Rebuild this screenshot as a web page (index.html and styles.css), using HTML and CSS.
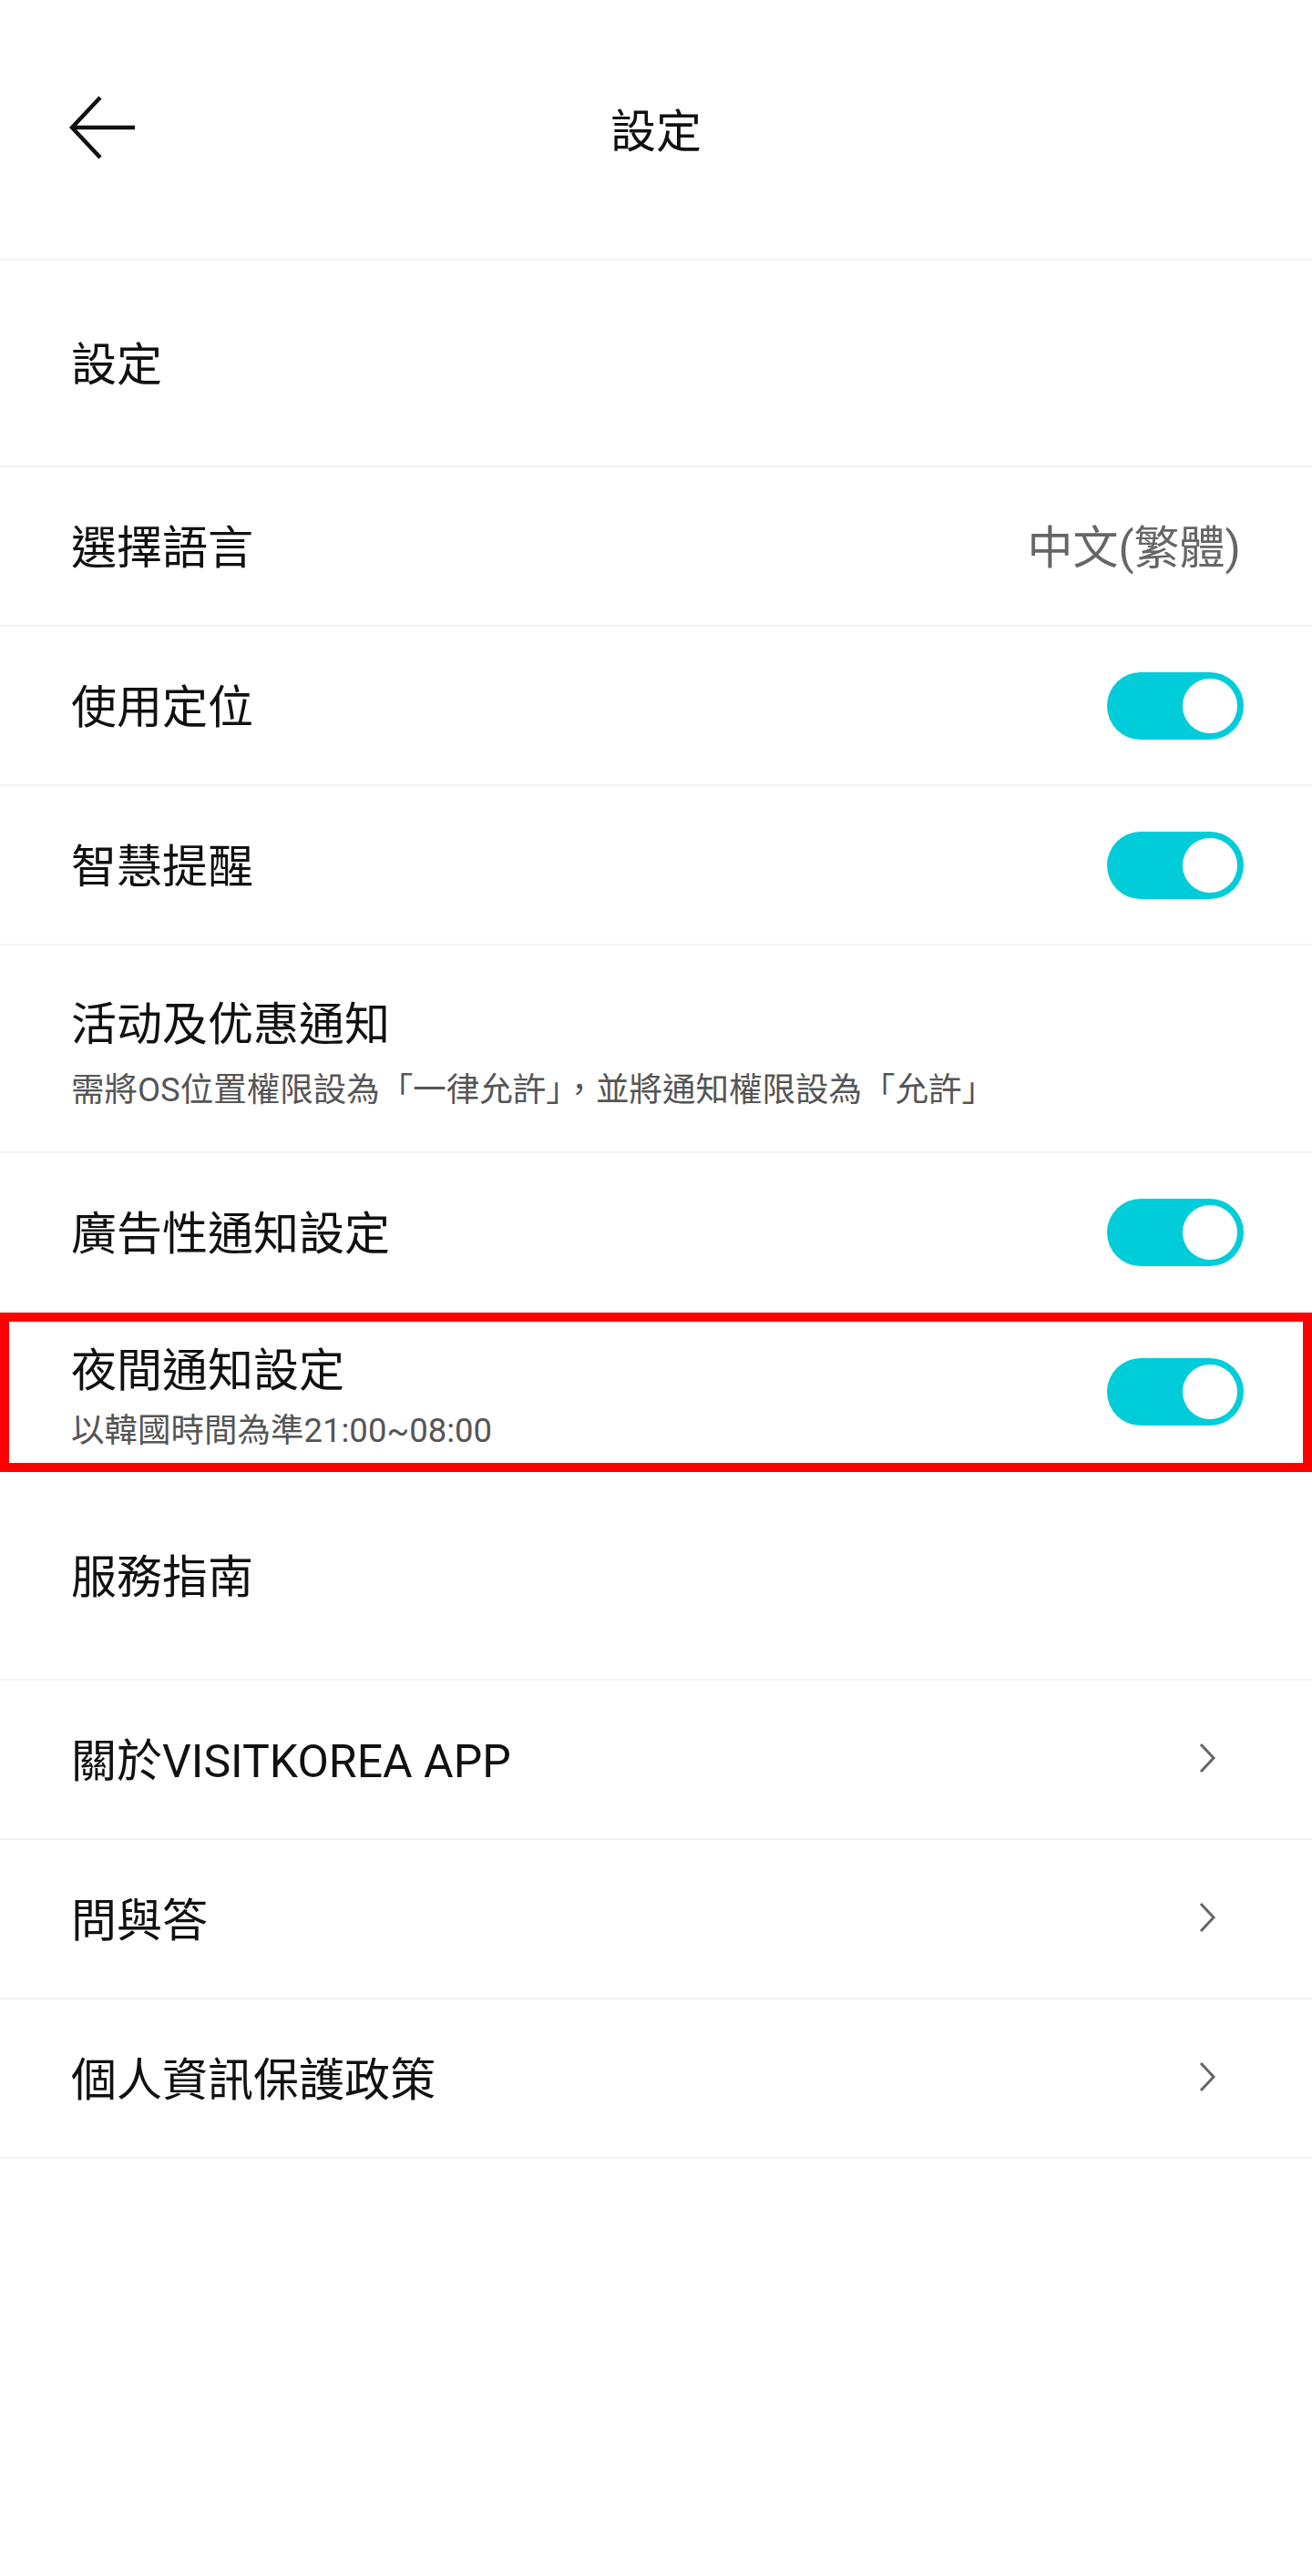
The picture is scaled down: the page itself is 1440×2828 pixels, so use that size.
FILE: index.html
```html
<!DOCTYPE html>
<html lang="zh-Hant">
  <head>
    <meta charset="UTF-8" />
    <meta name="viewport" content="width=device-width, initial-scale=1.0" />
    <title>設定</title>
    <link rel="stylesheet" href="styles.css">
  </head>

  <body>
    <div id="app">
      <header class="topbar">
        <button class="back" aria-label="back">
          <svg width="74" height="72" viewBox="0 0 74 72">
            <path d="M34 3 L3 36 L34 69 M3 36 H72" fill="none" stroke="#111" stroke-width="4.5" stroke-linejoin="miter" />
          </svg>
        </button>
        <h1 class="title">設定</h1>
        <div></div>
      </header>

      <div class="group">設定</div>
      <div class="row">
        <span class="label">選擇語言</span>
        <span class="value">中文(繁體)</span>
      </div>
      <div class="row">
        <span class="label">使用定位</span>
        <span class="toggle on"><span class="knob"></span></span>
      </div>
      <div class="row">
        <span class="label">智慧提醒</span>
        <span class="toggle on"><span class="knob"></span></span>
      </div>
      <div class="row tall">
        <div class="texts">
          <div class="label">活动及优惠通知</div>
          <div class="sub">需將OS位置權限設為「一律允許」，並將通知權限設為「允許」</div>
        </div>
      </div>
      <div class="row">
        <span class="label">廣告性通知設定</span>
        <span class="toggle on"><span class="knob"></span></span>
      </div>
      <div class="row marked">
        <div class="texts">
          <div class="label">夜間通知設定</div>
          <div class="sub">以韓國時間為準21:00~08:00</div>
        </div>
        <span class="toggle on"><span class="knob"></span></span>
      </div>

      <div class="group tall">服務指南</div>
      <div class="row">
        <span class="label">關於VISITKOREA APP</span>
        <svg class="chev" width="20" height="34" viewBox="0 0 20 34"><path d="M3 2 L17 17 L3 32" fill="none" stroke="#666" stroke-width="3" /></svg>
      </div>
      <div class="row">
        <span class="label">問與答</span>
        <svg class="chev" width="20" height="34" viewBox="0 0 20 34"><path d="M3 2 L17 17 L3 32" fill="none" stroke="#666" stroke-width="3" /></svg>
      </div>
      <div class="row">
        <span class="label">個人資訊保護政策</span>
        <svg class="chev" width="20" height="34" viewBox="0 0 20 34"><path d="M3 2 L17 17 L3 32" fill="none" stroke="#666" stroke-width="3" /></svg>
      </div>
    </div>
  </body>

</html>
```

FILE: styles.css
```css
body {
  margin: 0;
  padding: 0;
  background: #fff;
  font-family: Roboto, "Noto Sans CJK TC", sans-serif;
  color: #111;
}

#app {
  width: 1440px;
  min-height: 2828px;
  background: #fff;
}

.topbar {
  height: 286px;
  box-sizing: border-box;
  border-bottom: 2px solid #f3f3f3;
  display: grid;
  grid-template-columns: 1fr auto 1fr;
  align-items: center;
}

.back {
  background: transparent;
  border: 0;
  padding: 0;
  width: 74px;
  height: 72px;
  display: flex;
  margin: -4px 0 0 76px;
}

.title {
  margin: 0;
  font-size: 50px;
  font-weight: 400;
  line-height: 60px;
  margin-top: 6px;
}

.group {
  height: 227px;
  box-sizing: border-box;
  border-bottom: 2px solid #f3f3f3;
  display: flex;
  align-items: center;
  padding: 4px 0 0 78px;
  font-size: 50px;
  line-height: 60px;
}

.group.tall {
  height: 229px;
}

.row {
  height: 175px;
  box-sizing: border-box;
  border-bottom: 2px solid #f3f3f3;
  display: flex;
  align-items: center;
  justify-content: space-between;
  padding: 4px 75px 0 78px;
}

.row.tall {
  height: 228px;
}

.label {
  font-size: 50px;
  line-height: 60px;
}

.value {
  font-size: 50px;
  line-height: 60px;
  color: #666;
  margin-right: 3px;
}

.texts {
  padding-top: 8px;
}

.sub {
  font-size: 36.5px;
  line-height: 44px;
  color: #555;
  margin-top: 20px;
}

.marked .sub {
  margin-top: 14px;
}

.marked {
  outline: 10px solid #ff0000;
  outline-offset: -10px;
}

.toggle {
  width: 150px;
  height: 74px;
  box-sizing: border-box;
  border-radius: 37px;
  background: #ccc;
  display: flex;
  align-items: center;
  padding: 0 7px;
  margin-top: -4px;
}

.toggle.on {
  background: #00cdd9;
  justify-content: flex-end;
}

.knob {
  width: 60px;
  height: 60px;
  border-radius: 50%;
  background: #fff;
}

.chev {
  margin-right: 30px;
  margin-top: -8px;
}
```
